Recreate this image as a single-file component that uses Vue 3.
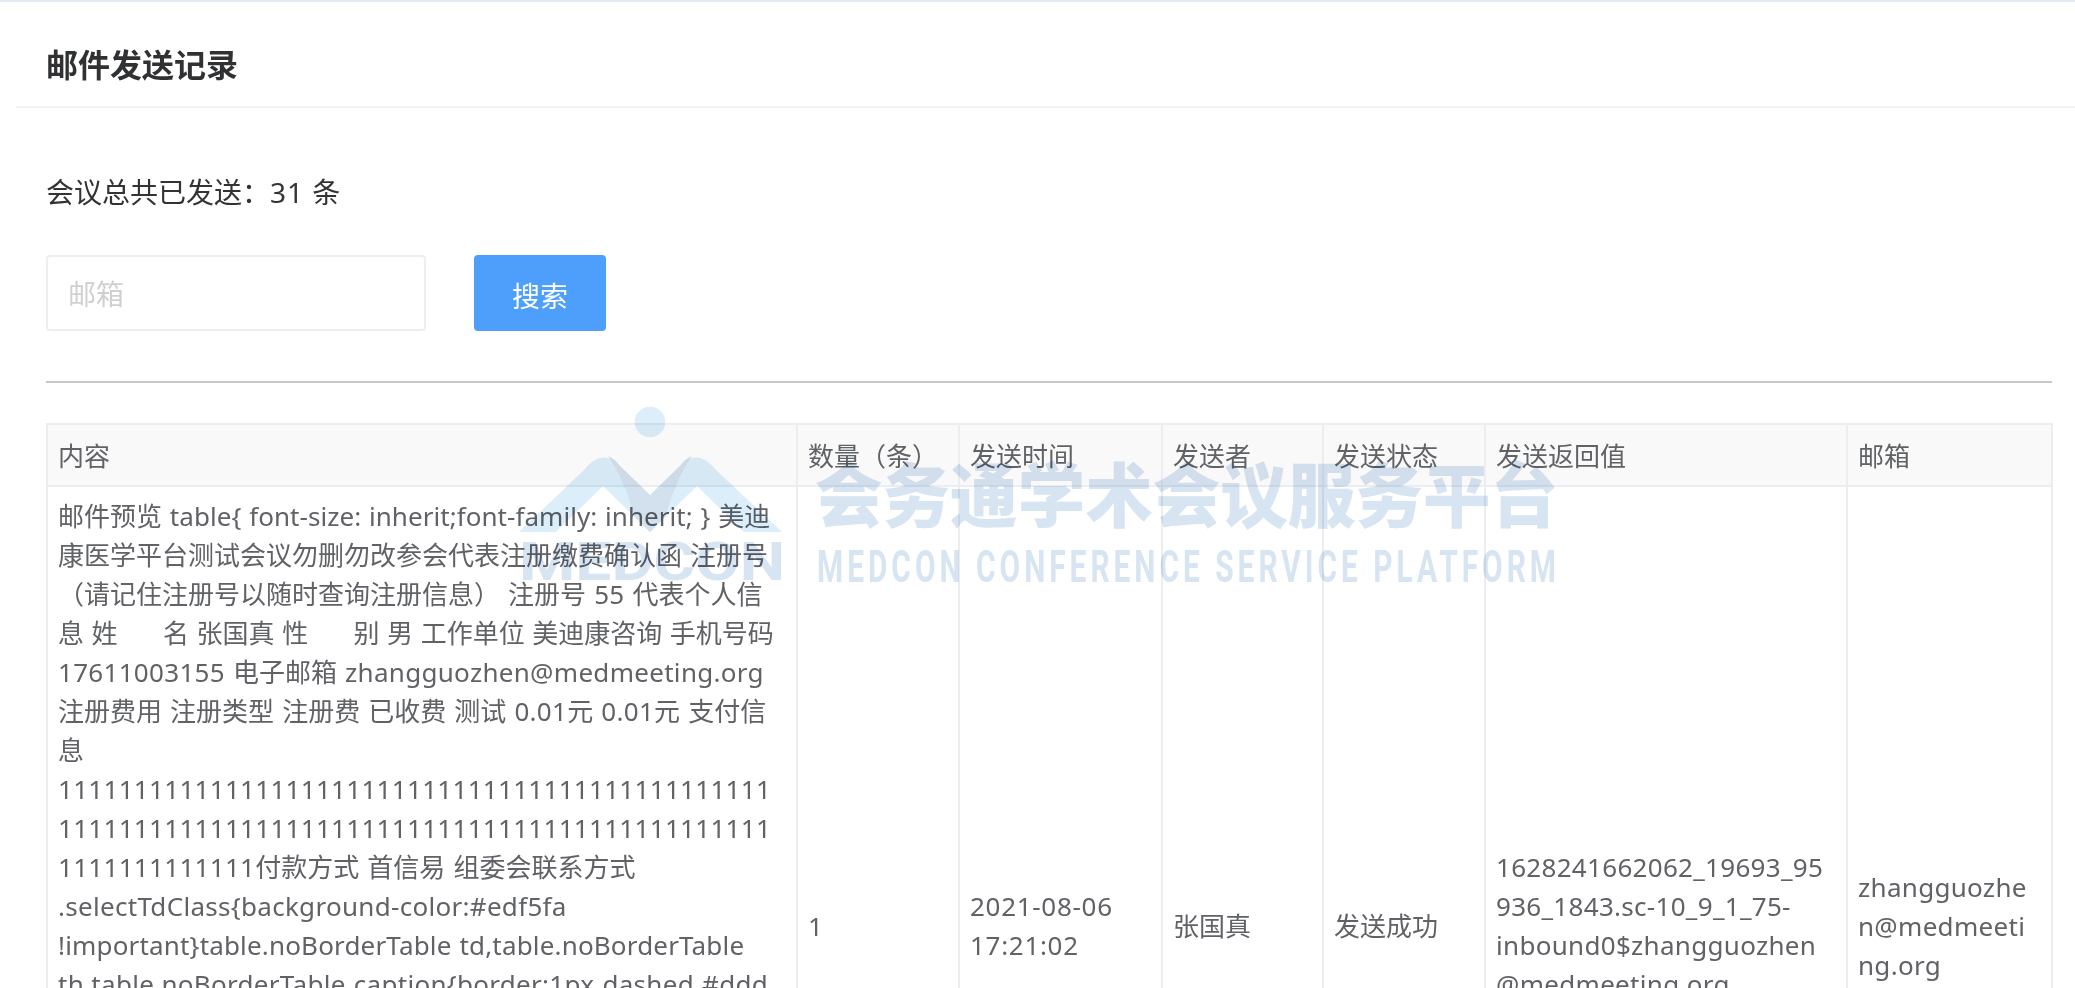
<script setup>
const columns = [
  { label: '内容', width: 750 },
  { label: '数量（条）', width: 162 },
  { label: '发送时间', width: 203 },
  { label: '发送者', width: 161 },
  { label: '发送状态', width: 162 },
  { label: '发送返回值', width: 362 },
  { label: '邮箱', width: 205 }
]
const contentLines = [
  '邮件预览 table{ font-size: inherit;font-family: inherit; } 美迪',
  '康医学平台测试会议勿删勿改参会代表注册缴费确认函 注册号',
  '（请记住注册号以随时查询注册信息） 注册号 55 代表个人信',
  '息 姓      名 张国真 性      别 男 工作单位 美迪康咨询 手机号码',
  '17611003155 电子邮箱 zhangguozhen@medmeeting.org',
  '注册费用 注册类型 注册费 已收费 测试 0.01元 0.01元 支付信',
  '息',
  '11111111111111111111111111111111111111111111111',
  '11111111111111111111111111111111111111111111111',
  '1111111111111付款方式 首信易 组委会联系方式',
  '.selectTdClass{background-color:#edf5fa',
  '!important}table.noBorderTable td,table.noBorderTable',
  'th,table.noBorderTable caption{border:1px dashed #ddd'
]
const timeLines = ['2021-08-06', '17:21:02']
const returnLines = ['1628241662062_19693_95', '936_1843.sc-10_9_1_75-', 'inbound0$zhangguozhen', '@medmeeting.org']
const mailLines = ['zhangguozhe', 'n@medmeeti', 'ng.org']

// Latin runs are set slightly wider than the default face, CJK runs are left alone.
const segments = (line) =>
  line.split(/([\x20-\x7e]+)/).filter(Boolean).map((text) => ({ text, latin: /^[\x20-\x7e]/.test(text) }))
</script>

<template>
  <div class="page">
    <header class="head"><h1>邮件发送记录</h1></header>
    <main class="body">
      <p class="count">会议总共已发送：<span class="lat">31</span> 条</p>
      <div class="search">
        <input class="field" type="text" placeholder="邮箱" />
        <button class="btn" type="button">搜索</button>
      </div>
      <hr class="rule" />
      <table class="grid">
        <colgroup>
          <col v-for="c in columns" :key="c.label" :style="{ width: c.width + 'px' }" />
        </colgroup>
        <thead>
          <tr><th v-for="c in columns" :key="c.label">{{ c.label }}</th></tr>
        </thead>
        <tbody>
          <tr class="row">
            <td class="content">
              <span v-for="(l, i) in contentLines" :key="i" class="line"><span v-for="(s, j) in segments(l)" :key="j" :class="{ lat: s.latin }">{{ s.text }}</span></span>
            </td>
            <td>1</td>
            <td><span v-for="l in timeLines" :key="l" class="line time">{{ l }}</span></td>
            <td>张国真</td>
            <td>发送成功</td>
            <td><span v-for="l in returnLines" :key="l" class="line lat">{{ l }}</span></td>
            <td><span v-for="l in mailLines" :key="l" class="line lat">{{ l }}</span></td>
          </tr>
        </tbody>
      </table>
    </main>
    <svg class="mark" width="2075" height="988" viewBox="0 0 2075 988" aria-hidden="true">
      <circle cx="650" cy="422" r="15.3" fill="#dceefa" />
      <path d="M519 532 L584 470 Q602 447 620 466 L650 495 L680 466 Q698 447 716 470 L782 532 L744 532 L697 486 L650 532 L603 486 L556 532 Z" fill="#dceefa" />
      <path d="M608 456 Q614 458 620 466 L650 495 L650 532 L634 516 Q625 480 608 456 Z" fill="#d3e0ee" />
      <path d="M692 456 Q686 458 680 466 L650 495 L650 532 L666 516 Q675 480 692 456 Z" fill="#d3e0ee" />
      <text class="mk-en" x="519" y="580" font-size="53" textLength="266" lengthAdjust="spacingAndGlyphs">MEDCON</text>
      <text class="mk-cn" x="815" y="522" font-size="70" textLength="743" lengthAdjust="spacingAndGlyphs">会务通学术会议服务平台</text>
      <text class="mk-en mk-sub" x="817" y="582" font-size="45" textLength="743" lengthAdjust="spacingAndGlyphs">MEDCON CONFERENCE SERVICE PLATFORM</text>
    </svg>
  </div>
</template>

<style scoped>
.page {
  position: relative;
  height: 988px;
  overflow: hidden;
  background: #fff;
  border-top: 2px solid #e4eaf2;
  box-sizing: border-box;
  font-family: "Noto Sans", "Noto Sans CJK SC", sans-serif;
  color: #606266;
}
.head {
  margin-left: 16px;
  padding: 18px 14px 0 30px;
  height: 86px;
  display: flex;
  align-items: center;
  border-bottom: 2px solid #f3f3f3;
}
.head h1 {
  margin: 0;
  font-size: 32px;
  font-weight: 700;
  color: #303133;
}
.body {
  padding: 0 23px 0 46px;
}
.count {
  margin: 0;
  padding-top: 63px;
  height: 86px;
  line-height: 42px;
  font-size: 28px;
  color: #333;
  word-spacing: 1px;
}
.count .lat {
  letter-spacing: 1px;
}
.search {
  display: flex;
  gap: 48px;
  height: 76px;
  margin-top: -2px;
}
.field {
  width: 380px;
  height: 76px;
  box-sizing: border-box;
  border: 2px solid #eeeeee;
  border-radius: 4px;
  padding: 2px 20px 0;
  font: inherit;
  font-size: 28px;
  outline: none;
  background: #fff;
}
.field::placeholder {
  color: #d0d0d0;
}
.btn {
  width: 132px;
  height: 76px;
  border: 0;
  border-radius: 4px;
  padding: 3px 0 0;
  background: #4e9ffb;
  color: #fff;
  font: inherit;
  font-size: 28px;
}
.rule {
  margin: 50px 0 0;
  height: 2px;
  border: 0;
  background: #c8c8c8;
}
.grid {
  margin-top: 40px;
  width: 2005px;
  table-layout: fixed;
  border-collapse: collapse;
  font-size: 26px;
  line-height: 39px;
  word-spacing: 1px;
}
th, td {
  border: 2px solid #ebedf0;
  padding: 10px;
  text-align: left;
  font-weight: 400;
  color: #606266;
  vertical-align: middle;
  box-sizing: border-box;
}
th {
  background: #f9f9f9;
  height: 62px;
  padding: 2px 10px 0;
}
.row {
  height: 880px;
}
td.content {
  vertical-align: top;
}
.line {
  display: block;
  white-space: pre;
}
.lat {
  letter-spacing: 0.3px;
}
.time {
  letter-spacing: 0.7px;
}
.content .line:nth-child(1) .lat {
  letter-spacing: 0.05px;
}
.content .line:nth-child(4) {
  word-spacing: 0.5px;
}
.content .line:nth-child(12) .lat {
  letter-spacing: 0.17px;
}
.mark {
  position: absolute;
  left: 0;
  top: -2px;
  pointer-events: none;
  mix-blend-mode: multiply;
}
.mk-cn {
  font-family: "Noto Sans CJK SC", sans-serif;
  font-weight: 900;
  fill: #d7e4f2;
}
.mk-en {
  font-family: Roboto, sans-serif;
  font-weight: 700;
  fill: #d7e4f2;
}
.mk-sub {
  letter-spacing: 6px;
}
</style>
